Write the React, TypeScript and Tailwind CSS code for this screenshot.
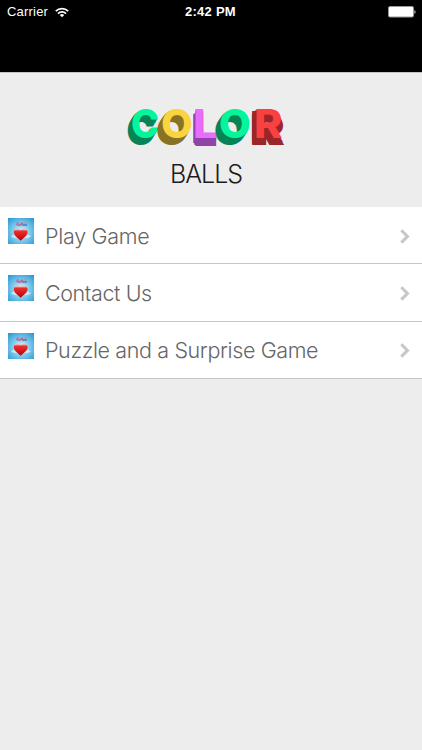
interface MenuItem {
  label: string;
  className: string;
}

const items: MenuItem[] = [
  { label: "Play Game", className: "tracking-[-0.28px]" },
  { label: "Contact Us", className: "tracking-[-0.4px]" },
  { label: "Puzzle and a Surprise Game", className: "tracking-[-0.38px]" },
];

function WifiIcon() {
  return (
    <svg width="14" height="11" viewBox="0 0 14 11" fill="none" stroke="#fff" strokeWidth="1.7">
      <path d="M0.8 4.2a8.8 8.8 0 0 1 12.4 0" />
      <path d="M3 6.6a5.7 5.7 0 0 1 8 0" />
      <path d="M7 10.3 4.8 8.1a3.2 3.2 0 0 1 4.4 0z" fill="#fff" stroke="none" />
    </svg>
  );
}

function BatteryIcon() {
  return (
    <svg width="28" height="12" viewBox="0 0 28 12">
      <rect x="0.5" y="0.5" width="25" height="10.5" rx="1.5" fill="#fff" stroke="#999" />
      <path d="M26.4 4v4c1.6-.6 1.6-3.4 0-4z" fill="#bbb" />
    </svg>
  );
}

function HeartIcon() {
  return (
    <svg width="26" height="26" viewBox="0 0 26 26" className="shrink-0">
      <defs>
        <radialGradient id="sky" cx="0.5" cy="0.55" r="0.7">
          <stop offset="0" stopColor="#e4f5fc" />
          <stop offset="0.5" stopColor="#7cc8ea" />
          <stop offset="1" stopColor="#2a9ad4" />
        </radialGradient>
        <linearGradient id="heart" x1="0" y1="0" x2="0" y2="1">
          <stop offset="0" stopColor="#f6e4e2" />
          <stop offset="0.2" stopColor="#e8322c" />
          <stop offset="0.6" stopColor="#d9141a" />
          <stop offset="1" stopColor="#9c0b12" />
        </linearGradient>
      </defs>
      <rect width="26" height="26" fill="url(#sky)" />
      <path d="M3 18.500q2-3 5-1h10q3-2 5 1l-3 1.500H6z" fill="#eef9fd" opacity="0.6" />
      <path d="M12.700 22.800C10 20 5.700 17.600 5.800 14c.1-3.400 4.800-4.400 6.900-1.700 2.100-2.700 6.800-1.700 6.900 1.700.1 3.600-4.200 6-6.900 8.800z" fill="url(#heart)" />
      <g strokeWidth="1.700" fill="none" opacity="0.85">
        <path d="M8 6l3 1.500M9 4.800l2 .5" stroke="#b46ba8" />
        <path d="M11 7.500l4-2.500" stroke="#d0526d" />
        <path d="M14 7.200l5-.4" stroke="#5573bb" />
        <path d="M16.500 5.500l2-1" stroke="#d2897c" />
      </g>
    </svg>
  );
}

function Chevron() {
  return (
    <svg width="10" height="15" viewBox="0 0 10 15" fill="none" stroke="#c7c7c7" strokeWidth="3">
      <path d="M1.300 1.200 7.500 7.400 1.300 13.600" />
    </svg>
  );
}

function Logo() {
  return (
    <div className="flex h-[40px] w-[158px] pl-[4px] font-['Inter',sans-serif] text-[40px] leading-[40px] font-extrabold">
      <span className="w-[30px] origin-left scale-x-95 text-[#05f59a] [text-shadow:-1px_1px_#078457,-2px_2px_#078457,-2px_3px_#078457,-3px_4px_#078457,-4px_5px_#078457,-4px_6px_#078457,-5px_7px_#078457]">C</span>
      <span className="w-[32px] origin-left scale-x-103 text-[#fad43f] [text-shadow:-1px_1px_#8a7225,-2px_2px_#8a7225,-2px_3px_#8a7225,-3px_4px_#8a7225,-4px_5px_#8a7225,-4px_6px_#8a7225,-5px_7px_#8a7225]">O</span>
      <span className="w-[26px] origin-left scale-x-108 text-[#e86cff] [text-shadow:0px_1px_#9144a8,0px_2px_#9144a8,0px_3px_#9144a8,-1px_4px_#9144a8,-1px_5px_#9144a8,-1px_6px_#9144a8,-1px_7px_#9144a8,-2px_5px_#9144a8,0px_8px_#9144a8]">L</span>
      <span className="w-[35px] origin-left scale-x-103 text-[#05f59a] [text-shadow:-1px_1px_#078457,-2px_2px_#078457,-2px_3px_#078457,-3px_4px_#078457,-4px_5px_#078457,-4px_6px_#078457,-5px_7px_#078457]">O</span>
      <span className="origin-left scale-x-108 text-[#fb4040] [text-shadow:-1px_1px_#9b2528,-2px_2px_#9b2528,-2px_3px_#9b2528,-3px_4px_#9b2528,-3px_5px_#9b2528,-4px_6px_#9b2528,-4px_7px_#9b2528,-4px_4px_#9b2528,-4px_2px_#9b2528,2px_7px_#9b2528,-1px_7px_#9b2528,1px_4px_#9b2528]">R</span>
    </div>
  );
}

export default function App() {
  return (
    <div className="h-[750px] w-[422px] overflow-hidden bg-[#ededed] font-['Liberation_Sans',sans-serif]">
      {/* Status bar and empty navigation bar */}
      <header className="h-[72px] bg-black text-white">
        <div className="grid h-6 grid-cols-[1fr_auto_1fr] items-center pr-[6px] pl-[7px] text-[13px]">
          <div className="flex items-center gap-[7px]">
            <span className="tracking-[0.2px]">Carrier</span>
            <WifiIcon />
          </div>
          <span className="-ml-[2px] font-bold tracking-[0.25px]">2:42 PM</span>
          <div className="flex justify-end">
            <BatteryIcon />
          </div>
        </div>
      </header>

      <section className="flex h-[135px] flex-col items-center border-t border-[#c4c4c4] pt-[31px] pr-[10px]">
        <Logo />
        <h1 className="mt-[15px] font-['Inter',sans-serif] text-[25px] leading-[30px] font-light tracking-[-1px] text-[#1c1c1c]">BALLS</h1>
      </section>

      <ul>
        {items.map((item) => (
          <li key={item.label} className="flex h-[57.300px] items-center border-b border-[#c6c6c6] bg-white pr-[12px] pb-px pl-2 shadow-[0_1px_0_#ececec]">
            <div className="mb-[7px]">
              <HeartIcon />
            </div>
            <span className={`ml-[11px] flex-1 pt-[2px] font-['Inter',sans-serif] text-[21.500px] leading-7 font-light whitespace-nowrap text-[#666] ${item.className}`}>
              {item.label}
            </span>
            <div className="pt-[3px]">
              <Chevron />
            </div>
          </li>
        ))}
      </ul>
    </div>
  );
}
